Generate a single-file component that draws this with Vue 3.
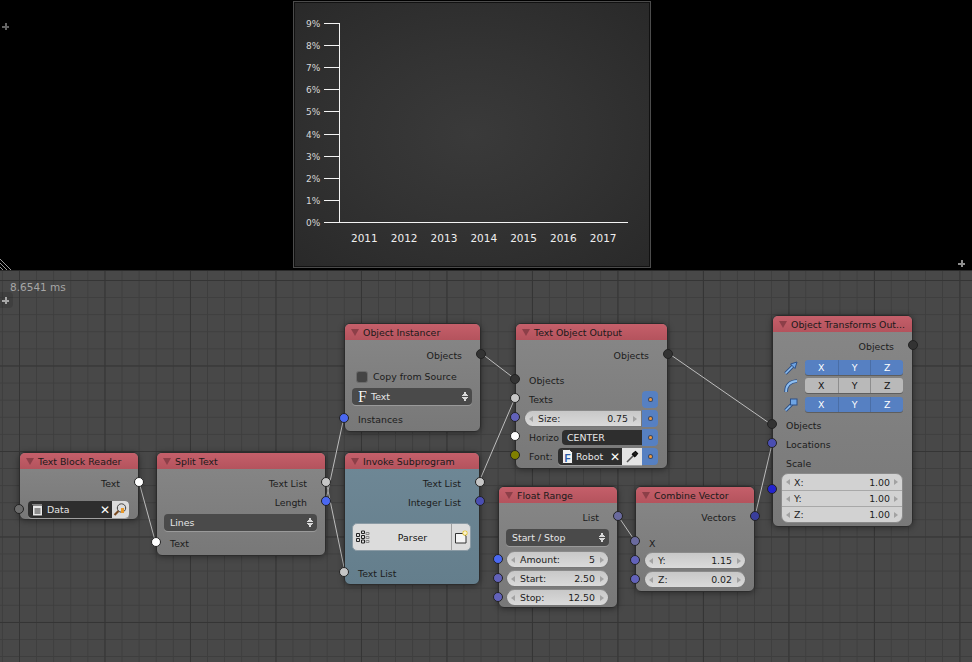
<script setup>
// node editor screenshot: chart viewport on top, node tree below
const percents = ['9%', '8%', '7%', '6%', '5%', '4%', '3%', '2%', '1%', '0%']
const years = ['2011', '2012', '2013', '2014', '2015', '2016', '2017']

// tick y and label x come straight from the chart spacing
const tickY = (i) => 23 + i * 22.1
const yearX = (i) => 351 + i * 39.8

const EDITOR_TOP = 271
const at = (x, y, w, h) => ({
  left: x + 'px',
  top: y - EDITOR_TOP + 'px',
  width: w + 'px',
  height: h + 'px'
})

// node links, page coordinates
const links = [
  [139, 482, 156, 544],
  [326, 481, 345, 572],
  [326, 500, 344, 417],
  [481, 353, 515, 379],
  [479, 482, 515, 398],
  [668, 353, 772, 425],
  [618, 516, 635, 541],
  [755, 516, 772, 444]
]
const axes = ['X', 'Y', 'Z']
</script>

<template>
  <div class="page">
    <section class="top">
      <div class="viewport">
        <svg class="chart" viewBox="293 1 358 267" width="358" height="267">
          <g stroke="#f4f4f4" stroke-width="1" shape-rendering="crispEdges">
            <line x1="339.5" y1="23" x2="339.5" y2="222" />
            <line v-for="(p, i) in percents" :key="p" x1="324" :y1="Math.round(tickY(i)) + 0.5" x2="339" :y2="Math.round(tickY(i)) + 0.5" />
            <line x1="339" y1="222.5" x2="628" y2="222.5" />
          </g>
          <text v-for="(p, i) in percents" :key="p" class="pct" x="306" :y="tickY(i) + 4">{{ p }}</text>
          <text v-for="(y, i) in years" :key="y" class="year" :x="yearX(i)" y="242">{{ y }}</text>
        </svg>
      </div>
      <span class="plus plus-a"></span>
      <span class="plus plus-b"></span>
      <svg class="hatch" width="12" height="12" viewBox="0 0 12 12">
        <path d="M0 1 L11 12 M0 5 L7 12 M0 9 L3 12" stroke="#9a9a9a" stroke-width="1" fill="none" />
      </svg>
    </section>

    <section class="editor">
      <span class="timing">8.6541 ms</span>
      <span class="plus-wrap"><span class="plus plus-c"></span></span>

      <svg class="links" width="972" height="391" viewBox="0 271 972 391">
        <line v-for="(l, i) in links" :key="i" :x1="l[0]" :y1="l[1]" :x2="l[2]" :y2="l[3]" stroke="#bdbdbd" stroke-width="1" />
      </svg>

      <!-- Text Block Reader -->
      <div class="node" :style="at(19, 452, 120, 68)">
        <header class="head"><i class="tri"></i>Text Block Reader</header>
        <div class="row out p5">Text<b class="sock out-s white"></b></div>
        <div class="row fieldrow m7">
          <b class="sock in-s grey mid"></b>
          <div class="idfield">
            <svg class="ico" width="13" height="14" viewBox="0 0 13 14">
              <rect x="1.5" y="2" width="10" height="11" rx="1" fill="#e8e8e8" stroke="#222" />
              <path d="M2 2 V1 M4 2 V1 M6 2 V1 M8 2 V1 M10 2 V1" stroke="#ddd" />
              <path d="M3.5 6 H9.5 M3.5 8 H9.5 M3.5 10 H9.5" stroke="#333" />
            </svg>
            <span class="idname">Data</span>
            <span class="x">✕</span>
            <span class="lightbtn browse">
              <svg width="15" height="15" viewBox="0 0 15 15">
                <circle cx="8.5" cy="6" r="4.2" fill="#dcdcdc" stroke="#444" />
                <path d="M5.5 9 L1.5 13" stroke="#7a4a20" stroke-width="2.2" />
                <rect x="8" y="6" width="3" height="5" fill="#e89a2c" />
              </svg>
            </span>
          </div>
        </div>
      </div>

      <!-- Split Text -->
      <div class="node" :style="at(156, 452, 170, 104)">
        <header class="head"><i class="tri"></i>Split Text</header>
        <div class="row out p5">Text List<b class="sock out-s light"></b></div>
        <div class="row out">Length<b class="sock out-s bright"></b></div>
        <div class="fieldrow m2 split-pad">
          <div class="drop">Lines<span class="updown"></span></div>
        </div>
        <div class="row in m3">Text<b class="sock in-s white"></b></div>
      </div>

      <!-- Object Instancer -->
      <div class="node" :style="at(344, 323, 137, 109)">
        <header class="head"><i class="tri"></i>Object Instancer</header>
        <div class="row out p6">Objects<b class="sock out-s dark"></b></div>
        <div class="row check m2"><i class="box"></i>Copy from Source</div>
        <div class="fieldrow m2 inst-pad">
          <div class="drop"><span class="bigf">F</span>Text<span class="updown"></span></div>
        </div>
        <div class="row in m5">Instances<b class="sock in-s bright"></b></div>
      </div>

      <!-- Invoke Subprogram -->
      <div class="node teal" :style="at(344, 452, 136, 133)">
        <header class="head"><i class="tri"></i>Invoke Subprogram</header>
        <div class="row out p5">Text List<b class="sock out-s light"></b></div>
        <div class="row out">Integer List<b class="sock out-s indigo"></b></div>
        <div class="fieldrow inst-pad m11">
          <div class="parser">
            <svg class="tree" width="14" height="14" viewBox="0 0 14 14">
              <path d="M0.5 3.5 h3 v3 h-3z M0.5 8.5 h3 v3 h-3z M5.5 1 h3 v2.5 h-3z M5.5 5.5 h3 v3 h-3z M5.5 10 h3 v3 h-3z" fill="none" stroke="#222" />
              <path d="M10 2.5 h3 v2 h-3z M10 6.5 h3 v2 h-3z M10 10.5 h3 v2 h-3z" fill="none" stroke="#888" />
            </svg>
            <span class="pname">Parser</span>
            <span class="pnew">
              <svg width="14" height="14" viewBox="0 0 14 14">
                <path d="M1.5 3.5 H9 L12 6 V13 H1.5 Z" fill="#f4f4f4" stroke="#333" />
                <circle cx="11" cy="3" r="2.6" fill="#e8c93a" />
                <path d="M11 1 V5 M9 3 H13" stroke="#fff" />
              </svg>
            </span>
          </div>
        </div>
        <div class="row in m13">Text List<b class="sock in-s light"></b></div>
      </div>

      <!-- Text Object Output -->
      <div class="node" :style="at(515, 323, 153, 146)">
        <header class="head"><i class="tri"></i>Text Object Output</header>
        <div class="row out p6">Objects<b class="sock out-s dark"></b></div>
        <div class="row in m6">Objects<b class="sock in-s dark"></b></div>
        <div class="row in texts">Texts<span class="anim"><i></i></span><b class="sock in-s light"></b></div>
        <div class="row tight">
          <b class="sock in-s peri"></b>
          <div class="num pill"><span>Size:</span><span>0.75</span></div>
          <span class="anim"><i></i></span>
        </div>
        <div class="row tight lbl">
          <b class="sock in-s white"></b>
          <label>Horizo</label>
          <div class="enum">CENTER</div>
          <span class="anim"><i></i></span>
        </div>
        <div class="row tight lbl">
          <b class="sock in-s olive"></b>
          <label class="short">Font:</label>
          <div class="idfield fontid">
            <svg class="ico" width="11" height="15" viewBox="0 0 11 15">
              <path d="M0.5 0.5 H7.5 L10.5 3.5 V14.5 H0.5 Z" fill="#f2f2f2" stroke="#333" />
              <text x="2.6" y="13" class="docf">F</text>
            </svg>
            <span class="idname">Robot</span>
            <span class="x">✕</span>
            <span class="lightbtn dropper">
              <svg width="14" height="14" viewBox="0 0 14 14">
                <path d="M2 12 L8 6" stroke="#555" stroke-width="1.6" fill="none" />
                <path d="M8 3.5 L10.5 1.5 L12.5 3.5 L10.5 6 Z M7 4 L10 7" stroke="#111" stroke-width="1.3" fill="#222" />
              </svg>
            </span>
          </div>
          <span class="anim"><i></i></span>
        </div>
      </div>

      <!-- Float Range -->
      <div class="node" :style="at(498, 486, 120, 122)">
        <header class="head"><i class="tri"></i>Float Range</header>
        <div class="row out p5">List<b class="sock out-s slate"></b></div>
        <div class="fieldrow m2 range-pad">
          <div class="drop">Start / Stop<span class="updown"></span></div>
        </div>
        <div class="fieldrow m5 range-pad"><b class="sock in-s bright mid"></b><div class="num pill"><span>Amount:</span><span>5</span></div></div>
        <div class="fieldrow m2 range-pad"><b class="sock in-s peri mid"></b><div class="num pill"><span>Start:</span><span>2.50</span></div></div>
        <div class="fieldrow m2 range-pad"><b class="sock in-s peri mid"></b><div class="num pill"><span>Stop:</span><span>12.50</span></div></div>
      </div>

      <!-- Combine Vector -->
      <div class="node" :style="at(635, 486, 120, 106)">
        <header class="head"><i class="tri"></i>Combine Vector</header>
        <div class="row out p5">Vectors<b class="sock out-s navy"></b></div>
        <div class="row in m7 short-row">X<b class="sock in-s slate"></b></div>
        <div class="fieldrow vec-pad"><b class="sock in-s peri mid"></b><div class="num pill"><span>Y:</span><span>1.15</span></div></div>
        <div class="fieldrow m2 vec-pad"><b class="sock in-s peri mid"></b><div class="num pill"><span>Z:</span><span>0.02</span></div></div>
      </div>

      <!-- Object Transforms Output -->
      <div class="node" :style="at(772, 315, 141, 212)">
        <header class="head"><i class="tri"></i>Object Transforms Out...</header>
        <div class="row out p5">Objects<b class="sock out-s dark"></b></div>
        <div class="xyzrow m4">
          <svg width="14" height="14" viewBox="0 0 14 14">
            <path d="M1.5 12.5 L9 5" stroke="#2c4f86" stroke-width="3.4" />
            <path d="M1.5 12.5 L9 5" stroke="#8fc0f2" stroke-width="1.6" />
            <path d="M6.5 3 L13 1 L11 7.5 Z" fill="#6ea4e4" stroke="#2c4f86" />
          </svg>
          <div class="xyz on"><span v-for="a in axes" :key="a">{{ a }}</span></div>
        </div>
        <div class="xyzrow m3">
          <svg width="14" height="14" viewBox="0 0 14 14">
            <path d="M2 13 C2 6 6 2.5 13 2" fill="none" stroke="#2c4f86" stroke-width="3.6" />
            <path d="M2 13 C2 6 6 2.5 13 2" fill="none" stroke="#8fc0f2" stroke-width="1.8" />
          </svg>
          <div class="xyz"><span v-for="a in axes" :key="a">{{ a }}</span></div>
        </div>
        <div class="xyzrow m4">
          <svg width="14" height="14" viewBox="0 0 14 14">
            <path d="M1.5 12.5 L8 6" stroke="#2c4f86" stroke-width="3.4" />
            <path d="M1.5 12.5 L8 6" stroke="#8fc0f2" stroke-width="1.6" />
            <rect x="6.5" y="1" width="6.5" height="6" fill="#6ea4e4" stroke="#2c4f86" />
          </svg>
          <div class="xyz on"><span v-for="a in axes" :key="a">{{ a }}</span></div>
        </div>
        <div class="row in m4">Objects<b class="sock in-s dark"></b></div>
        <div class="row in">Locations<b class="sock in-s indigo"></b></div>
        <div class="row in">Scale</div>
        <div class="scale">
          <b class="sock in-s pure scale-s"></b>
          <div class="num"><span>X:</span><span>1.00</span></div>
          <div class="num"><span>Y:</span><span>1.00</span></div>
          <div class="num"><span>Z:</span><span>1.00</span></div>
        </div>
      </div>
    </section>
  </div>
</template>

<style scoped>
.page {
  width: 972px;
  height: 662px;
  display: flex;
  flex-direction: column;
  overflow: hidden;
  font-family: "DejaVu Sans", sans-serif;
  font-size: 9.4px;
  color: #1c1c1c;
}

/* chart area */
.top {
  position: relative;
  height: 270px;
  background: #000;
  flex: none;
}
.viewport {
  margin: 1px 0 0 293px;
  width: 358px;
  height: 267px;
  box-sizing: border-box;
  border: 1px solid #4c4c4c;
  outline: 1px solid #111;
  outline-offset: -2px;
  background: radial-gradient(ellipse at 50% 50%, #3a3a3a 0%, #333 45%, #292929 100%);
  overflow: hidden;
}
.chart { display: block; margin: -1px; }
.pct { fill: #d8d8d8; font-size: 9px; font-family: "DejaVu Sans", sans-serif; }
.year { fill: #efefef; font-size: 10.5px; font-family: "DejaVu Sans", sans-serif; }

.plus {
  position: absolute;
  width: 7px;
  height: 7px;
  background:
    linear-gradient(#8e8e8e, #8e8e8e) center / 7px 2px no-repeat,
    linear-gradient(#8e8e8e, #8e8e8e) center / 2px 7px no-repeat;
}
.plus-a { left: 2px; top: 23px; opacity: 0.7; }
.plus-b { left: 958px; top: 260px; }
.plus-wrap {
  position: absolute;
  left: -3px;
  top: 21px;
  width: 16px;
  height: 16px;
  border-radius: 4px;
  background: rgba(0, 0, 0, 0.12);
}
.plus-c { left: 5px; top: 5px; background:
    linear-gradient(#a8a8a8, #a8a8a8) center / 7px 2px no-repeat,
    linear-gradient(#a8a8a8, #a8a8a8) center / 2px 7px no-repeat; }
.hatch { position: absolute; left: 0; bottom: 0; }

/* node editor */
.editor {
  position: relative;
  flex: 1;
  border-top: 1px solid #2a2a2a;
  background-color: #484848;
  background-image:
    linear-gradient(to right, #353535 1px, transparent 1px),
    linear-gradient(to bottom, #353535 1px, transparent 1px),
    linear-gradient(to right, #3e3e3e 1px, transparent 1px),
    linear-gradient(to bottom, #3e3e3e 1px, transparent 1px);
  background-size: 85.5px 85.5px, 85.5px 85.5px, 17.1px 17.1px, 17.1px 17.1px;
  background-position: 19px 9px, 19px 9px, 1.9px 9px, 1.9px 9px;
}
.timing {
  position: absolute;
  left: 10px;
  top: 10px;
  color: #a6a6a6;
  font-size: 10.5px;
}
.links { position: absolute; left: 0; top: 0; }

.node {
  position: absolute;
  box-sizing: border-box;
  border: 1px solid #2c2c2c;
  border-radius: 6px;
  background: linear-gradient(#878787, #787878);
  box-shadow: 0 1px 6px rgba(0, 0, 0, 0.4);
}
.node.teal { background: linear-gradient(#6f8896, #647e8c); }
.head {
  display: flex;
  align-items: center;
  height: 16px;
  padding-left: 18px;
  position: relative;
  border-radius: 5px 5px 0 0;
  background: linear-gradient(#c55f6a, #b4535d);
  color: #1a1a1a;
  white-space: nowrap;
  overflow: hidden;
}
.tri {
  position: absolute;
  left: 6px;
  top: 5px;
  border-left: 4px solid transparent;
  border-right: 4px solid transparent;
  border-top: 7px solid #8c3f48;
}

/* rows */
.row {
  position: relative;
  height: 19px;
  display: flex;
  align-items: center;
  white-space: nowrap;
}
.row.out { justify-content: flex-end; padding-right: 18px; }
.row.in { padding-left: 13px; }
.row.check { padding-left: 11px; }
.row.short-row { height: 18px; }
.row.tight { padding: 0 9px 0 8px; gap: 0; }
.row.lbl { padding-left: 13px; }
.row.texts { padding-right: 9px; }
.row.texts .anim { margin-left: auto; height: 17px; }

.p5 { margin-top: 5px; }
.p6 { margin-top: 6px; }
.m2 { margin-top: 2px; }
.m3 { margin-top: 3px; }
.m4 { margin-top: 4px; }
.m5 { margin-top: 5px; }
.m6 { margin-top: 6px; }
.m7 { margin-top: 7px; }
.m11 { margin-top: 11px; }
.m13 { margin-top: 13px; }

.fieldrow { position: relative; }
.split-pad { padding: 0 8px 0 7px; }
.inst-pad { padding: 0 8px 0 7px; }
.range-pad { padding: 0 8px 0 7px; }
.vec-pad { padding: 0 8px 0 8px; }

.sock {
  position: absolute;
  width: 10px;
  height: 10px;
  box-sizing: border-box;
  border-radius: 50%;
  border: 1px solid #222;
  top: calc(50% - 7px);
  z-index: 2;
}
.sock.mid { top: calc(50% - 6px); }
.in-s { left: -6px; }
.out-s { right: -6px; }
.white { background: #fff; }
.grey { background: #6c6c6c; }
.light { background: #c6c6c6; }
.dark { background: #333; }
.bright { background: #4a68f2; }
.indigo { background: #4a4eb2; }
.peri { background: #6262ba; }
.slate { background: #6a6a9e; }
.navy { background: #3a3e9c; }
.olive { background: #808000; }
.pure { background: #2222d0; }

/* widgets */
.idfield {
  flex: 1;
  display: flex;
  align-items: center;
  height: 17px;
  border-radius: 4px;
  background: #2e2e2e;
  color: #e6e6e6;
  position: relative;
  overflow: hidden;
  box-shadow: 0 1px 0 #a0a0a0;
}
.fieldrow > .idfield { margin: 0 9px 0 8px; }
.ico { margin-left: 3px; flex: none; }
.idname { margin-left: 3px; white-space: nowrap; }
.x {
  margin-left: auto;
  color: #fff;
  font-size: 12px;
  font-weight: bold;
  width: 14px;
  text-align: center;
}
.lightbtn {
  width: 17px;
  height: 17px;
  flex: none;
  display: flex;
  align-items: center;
  justify-content: center;
  background: #dcdcdc;
}
.fontid { margin-left: 2px; min-width: 0; border-radius: 4px 0 0 4px; }
.fontid .ico { margin-left: 4px; }
.dropper { width: 20px; background: #e4e4e4; }

.drop {
  position: relative;
  height: 17px;
  display: flex;
  align-items: center;
  padding-left: 6px;
  border-radius: 4px;
  background: #4a4a4a;
  color: #e6e6e6;
  box-shadow: 0 1px 0 #9a9a9a;
}
.bigf {
  font-family: "Liberation Serif", serif;
  font-size: 16px;
  color: #f4f4f4;
  width: 13px;
  text-shadow: 0 0 1px #111;
}
.updown {
  position: absolute;
  right: 4px;
  top: 3px;
  width: 6px;
  height: 11px;
  background:
    conic-gradient(from 150deg at 50% 0, #d8d8d8 60deg, transparent 0) 0 0 / 6px 5px no-repeat,
    conic-gradient(from -30deg at 50% 100%, #d8d8d8 60deg, transparent 0) 0 100% / 6px 5px no-repeat;
}

.box {
  width: 10px;
  height: 10px;
  margin: 0 6px 0 1px;
  border-radius: 2px;
  background: #444;
  box-shadow: 0 0 0 1px #6a6a6a;
}

.num {
  position: relative;
  height: 17px;
  box-sizing: border-box;
  flex: 1;
  display: flex;
  align-items: center;
  justify-content: space-between;
  padding: 0 13px;
  background: #d2d2d2;
  color: #1c1c1c;
  min-width: 0;
  white-space: nowrap;
}
.num::before,
.num::after {
  content: "";
  position: absolute;
  top: 5px;
  border-top: 3px solid transparent;
  border-bottom: 3px solid transparent;
}
.num::before { left: 4px; border-right: 4px solid #a2a2a2; }
.num::after { right: 4px; border-left: 4px solid #a2a2a2; }
.pill {
  border-radius: 9px;
  border: 1px solid #777;
  border-top-color: #8a8a8a;
  background: linear-gradient(#c8c8c8, #dadada);
}
.tight .pill { border-radius: 9px 0 0 9px; }

.anim {
  width: 16px;
  height: 17px;
  flex: none;
  display: flex;
  align-items: center;
  justify-content: center;
  border-radius: 0 4px 4px 0;
  background: #5680c2;
}
.anim i {
  width: 3px;
  height: 3px;
  border-radius: 50%;
  background: #f19a3e;
  box-shadow: 0 0 0 1px #3c4a66;
}
.row.texts .anim { border-radius: 4px; }

label { width: 33px; overflow: hidden; flex: none; }
label.short { width: 27px; }
.enum {
  flex: 1;
  height: 15px;
  line-height: 15px;
  background: #2e2e2e;
  color: #e8e8e8;
  padding-left: 5px;
  border-radius: 4px 0 0 4px;
}

.parser {
  height: 28px;
  box-sizing: border-box;
  display: flex;
  align-items: center;
  border-radius: 5px;
  border: 1px solid #8b9ba5;
  background: #dcdcdc;
  color: #111;
}
.tree { margin-left: 3px; flex: none; }
.pname { flex: 1; text-align: center; padding-left: 4px; }
.pnew {
  width: 18px;
  height: 100%;
  border-left: 1px solid #a0a0a0;
  display: flex;
  align-items: center;
  justify-content: center;
  flex: none;
}

.xyzrow {
  display: flex;
  align-items: center;
  height: 15px;
  padding: 0 9px 0 11px;
  gap: 7px;
}
.xyzrow svg { flex: none; }
.xyz {
  flex: 1;
  display: grid;
  grid-template-columns: 1fr 1fr 1fr;
  height: 15px;
  border-radius: 3px;
  overflow: hidden;
  background: #b9b9b9;
  color: #111;
  box-shadow: 0 1px 0 #5e5e5e;
}
.xyz span {
  display: flex;
  align-items: center;
  justify-content: center;
  border-left: 1px solid #8d8d8d;
}
.xyz span:first-child { border-left: 0; }
.xyz.on { background: #5680c2; color: #fff; }
.xyz.on span { border-left-color: #4a6ea6; }

.scale {
  position: relative;
  margin: 0 9px 0 8px;
  display: flex;
  flex-direction: column;
  gap: 0;
  border: 1px solid #8a8a8a;
  border-radius: 7px;
  overflow: visible;
  background: #d2d2d2;
}
.scale .num {
  flex: none;
  height: 16px;
  background: transparent;
  border-top: 1px solid #a8a8a8;
  padding: 0 12px;
}
.scale .num:first-of-type { border-top: 0; }
.scale-s { left: -15px; top: 10px; }
</style>

<style>
html, body { margin: 0; background: #000; }
.docf { font: bold 10px "Liberation Sans", sans-serif; fill: #2a5ca8; }
</style>
